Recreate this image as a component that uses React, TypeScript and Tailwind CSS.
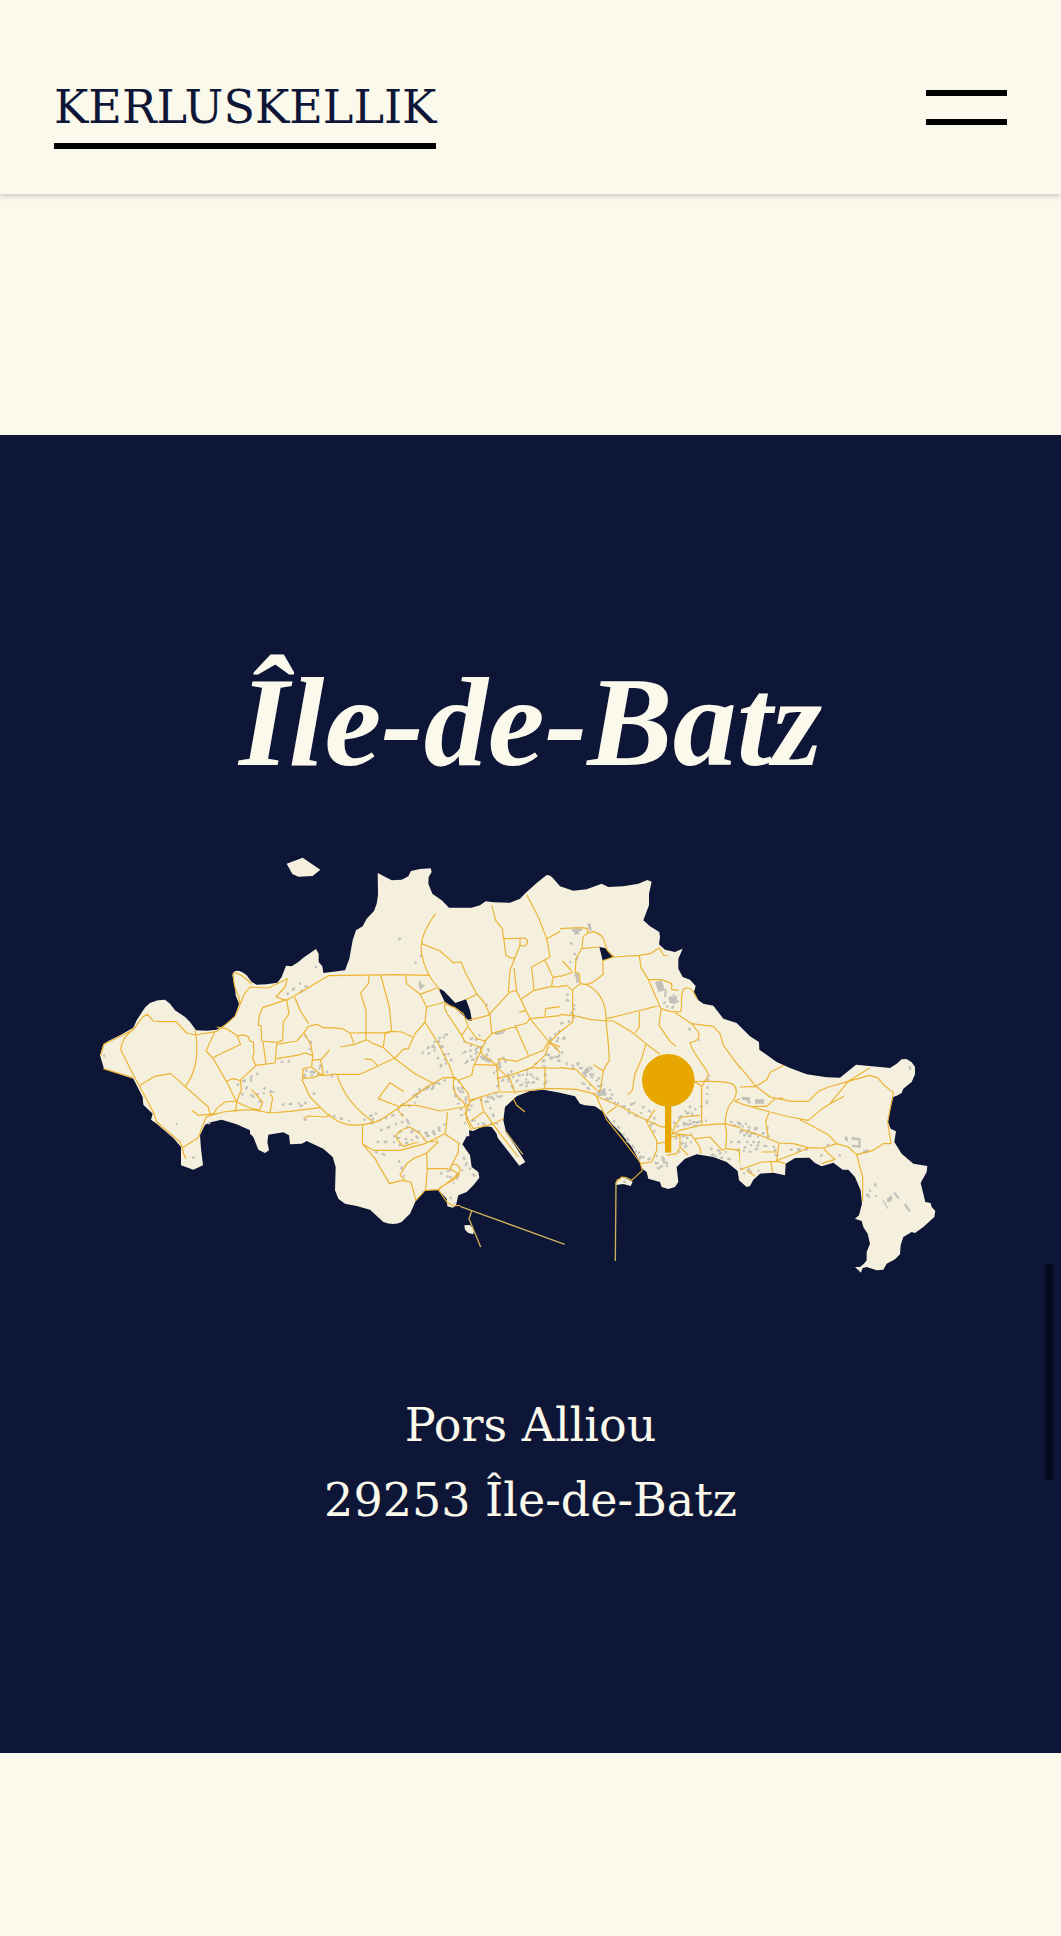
const COAST =
  "M30 645L40 612L55 602L90 585L130 562L140 540L158 512Q166 498 180 488Q200 478 225 478L240 490L255 510L285 530L300 545L318 570L350 571L380 568L410 550L435 528L447 490L437 465L435 440L427 405Q429 392 440 391Q456 391 470 405L485 425L500 433L530 432L562 427L575 410L588 376L605 378L625 365L640 352L678 326L686 340L686 365L697 378L700 398L765 390L778 355L788 300L798 270L818 258L830 235L852 212L860 190L864 165L863 98L905 120L935 118L955 108L963 92L990 86L1022 84L1025 95L1016 110L1015 130L1027 160L1055 180L1077 202L1145 202L1170 195L1187 183L1210 186L1260 187L1290 175L1310 155L1340 128L1370 104Q1380 103 1388 112L1410 138L1450 151L1490 147L1535 130L1555 140L1600 138L1645 130L1672 119L1685 124L1677 160L1677 195L1660 240L1680 258L1708 275L1710 290L1707 312L1725 328L1755 335L1778 325L1765 355L1765 385L1778 410L1800 418L1817 437L1812 455L1825 480L1840 490L1870 496L1900 535L1940 548L1980 588L2007 605L2008 628L2060 665L2100 683L2150 702L2210 711L2250 712L2298 673L2330 676L2400 683L2420 670L2435 657L2450 656L2465 666L2475 680L2475 702L2465 725L2440 745L2435 758L2420 766L2410 770L2400 810L2394 845L2402 865L2418 873L2413 905L2435 940L2470 970L2512 977L2510 995L2492 1028L2500 1060L2506 1085L2522 1088L2525 1100L2536 1112L2533 1130L2500 1160L2475 1178L2465 1175L2440 1190L2432 1215L2430 1242L2415 1257L2390 1270L2380 1288L2360 1290L2330 1280L2318 1283L2313 1297L2295 1280L2310 1280L2322 1270L2330 1260L2330 1235L2340 1210L2333 1180L2320 1160L2315 1142L2295 1135L2307 1125L2316 1090L2312 1050L2295 1010L2275 988L2258 988L2230 967L2195 978L2175 968L2158 952L2115 953L2087 970L2085 1005L2050 997L2010 1000L1990 1018L1980 1037L1970 1040L1947 1020L1943 992L1910 965L1870 950L1820 942L1785 955L1760 980L1765 1025L1755 1040L1735 1046L1715 1040L1710 1025L1675 1015L1670 995L1657 985L1650 965L1625 920L1590 875L1565 850L1540 815L1515 798L1485 795L1470 790L1455 768L1410 757L1360 748L1320 752L1280 768L1245 800L1240 840L1248 875L1306 965L1288 976L1223 892L1220 880L1205 860L1180 857L1150 872L1137 870L1138 888L1130 888L1117 912L1140 945L1145 980L1165 995L1168 1012L1150 1035L1130 1055L1105 1065L1098 1095L1088 1102L1072 1098L1070 1075L1045 1048L1005 1050L978 1080L960 1120L935 1145Q910 1157 880 1145L840 1108L800 1097L765 1090L745 1075L735 1050L737 980L728 950L700 925L650 902L635 910L600 912L597 885L580 876L535 883L532 905L537 930L525 938L505 928L490 890L480 880L480 870L440 852L395 838L365 845L345 853L330 885L333 925L339 975L310 988L273 975L273 920L250 893L200 850L183 838L188 820L160 793L158 770L130 715L85 700L42 685Z";

const ISLETS =
  "M590 70L638 52L691 88L668 107L625 109L607 101ZM1123 1155L1140 1154L1152 1168L1150 1182L1135 1178L1125 1168ZM1578 1034L1580 1018L1600 1010L1628 1024L1622 1037L1600 1031Z";

const WATER =
  "M1044 442L1062 452L1096 488L1128 477L1140 510L1146 541L1135 540L1112 518L1098 506L1064 484ZM1528 320L1545 323L1573 349L1538 360Z";

const WEST_ROADS =
  "M32 645L42 612L130 568L158 530L172 522L190 542L215 544L258 544L290 578L315 584L380 574L410 550L435 528L452 488L462 462L480 440L535 443L592 415L585 440L558 470L590 480L650 445L715 406L900 403 M130 566Q90 600 93 630L128 700L150 740L190 815L200 845L270 905L277 922L325 892L348 830L362 825L400 815L440 810L490 808L540 818L600 813L690 802 M40 685L128 712 M150 735L195 708L242 700L355 800L360 822 M315 570Q325 610 318 660Q310 710 284 740 M375 573L348 632L370 655L410 725L440 785Q480 805 510 810 M368 652L452 612L440 585L410 565L380 560 M440 588Q465 580 475 590L480 602L490 605L492 635L488 655L498 675L450 720L455 745L440 785L436 815 M498 675L555 668L560 612L620 602L640 580L655 558 M505 555L508 525L518 502L590 478L597 520L580 545L578 600L560 606L515 602L513 556Z M519 605L528 670 M614 470L630 510L656 550 M656 558L680 552L700 562L750 563 M560 655L620 645L645 638L668 645L663 615L642 578 M668 645L665 680L640 685L637 720L660 770L715 825L740 842 M665 680L695 705L805 702 M638 714L670 712L700 700L692 660L720 627 M692 657L665 660 M370 822L380 805L405 785L440 782 M306 810L325 825L375 820 M485 748L518 785L508 810 M540 760L548 772L540 817 M640 835L655 827L710 830L720 820 M410 722L430 715L455 722 M277 922Q278 940 288 955 M430 400Q430 440 445 465L450 490 M430 398Q450 395 485 432";

const VILLAGE_ROADS =
  "M0 406L200 403L298 405 M0 562L38 565L60 578L165 577L185 573L215 575L248 590 M117 406L115 430L92 458L108 510L108 600 M152 404L178 500L185 573L165 580L160 620 M60 578L72 610 M30 620L75 612L110 598L130 610L160 622L195 655L255 700L315 732 M0 702L90 702L195 653L220 627L235 625L255 580L285 545L290 500L270 462L230 430L227 405 M270 462L320 443 M290 500L345 485 M317 220Q275 275 273 320Q275 365 300 410L330 450 M345 487Q350 495 375 502L400 520L415 560L440 595L465 602L485 580 M275 310L330 332L370 367L393 365L408 400L440 460L465 490L480 525L485 580L590 548L600 535L725 522 M440 462L408 478 M415 540L475 525L540 455L560 450 M485 195L497 240L517 265L528 345L540 353L555 352 M523 295L585 293Q600 305 585 317L570 315L540 390L535 455 M570 293L570 315 M552 383L560 452L600 535L655 602 M590 163L625 230L650 295L660 350L605 380L612 450 M648 297L705 265L720 263 M645 360L670 412L730 395 M668 415L665 438L612 450L575 475 M665 438L690 440L710 435 M697 362L725 392 M645 527L647 505L690 499 M568 516L588 510 M555 555L575 600L595 645 M655 602L700 645L718 682 M727 545L690 575L660 605L645 645L605 682 M655 605L690 620L708 598 M605 682L740 685 M645 682L645 745 M345 490Q340 505 355 525L395 585L405 605L450 620L455 640L500 675L510 690L540 715L555 760 M412 560L395 585 M465 605L430 680L425 705L385 720L372 715L360 680L325 610L285 545 M435 672L500 675L510 655L560 663L640 630L655 605 M500 715L540 705L605 682 M500 675L508 750 M420 780L500 755L555 755L645 745L740 745 M372 712Q362 760 400 785L408 800L410 840L425 870 M385 912L385 935L360 985L385 1000 M385 720L415 760L418 790L405 820L430 865L485 853L520 835 M418 785L450 770L460 810L510 880L565 950 M550 775L560 795L585 815 M425 840L460 815 M380 712L340 712L290 740L210 800L150 840Q50 875 0 825 M22 705Q45 785 130 845 M210 800L145 775L180 727L222 754 M210 795L260 795L330 812L400 800L420 790 M200 805L220 830 M98 855L97 910L130 930L210 930L285 910L345 880L390 912 M352 815Q350 860 345 880 M97 910L135 955L178 1030L215 1020L243 1025L258 1080L285 1050L325 1048L362 1020L385 1000 M290 940L292 985L287 1048 M290 985L355 985 M325 905L290 938L250 955L230 970L210 1005L225 1018 M198 890Q200 870 240 860L270 880L290 905L325 902 M198 890L205 902L220 918L265 905 M325 1048L350 1085L370 1097L390 1095 M360 990Q360 970 380 972Q402 990 375 1015L325 1045 M104 655L125 658L142 675";

const EAST_ROADS =
  "M-20 268L0 265L60 262L82 264L84 278L100 274Q122 280 130 295L142 330L160 350L238 345L270 340L298 323L310 344L323 347 M84 278Q68 285 68 300L66 322L48 355L46 395L58 400L60 430L38 448L38 545L0 575 M66 325L118 320 M128 362L160 350 M128 362L130 402L100 425L80 433L58 430 M-20 438L0 438L20 435L38 450 M-10 412L40 395 M8 362L35 392 M75 430Q140 460 138 540L145 610L148 660L130 690L122 745L115 755 M0 523L40 525L90 537L140 542L160 542L215 575L258 610L300 642 M238 345L243 382L265 418L303 505L330 513L362 515L365 490Q362 462 372 445Q388 438 400 455L411 475 M265 418L305 418L335 430L335 447L355 450 M140 535L210 518L300 495 M238 515L238 560L225 578 M303 507L297 555L330 603L347 617 M345 517L395 550L415 575Q425 600 390 607Q395 630 440 690L445 705L425 740L425 850 M395 550L460 558L480 580L490 615L545 690L560 700L590 740L620 760L660 773 M258 610L245 655L225 700L217 750L203 762 M403 724L425 738 M403 724Q500 720 520 733Q538 750 520 780Q498 800 495 850L420 855L360 870L335 882 M523 783L620 740L635 715L670 675 M525 783L560 795L600 803 M495 850L540 862L600 885L655 907 M495 850L500 880L497 925L487 930L450 890L405 895 M500 925L540 930L577 920 M537 925L542 985L610 965L655 962 M547 985L585 1007 M0 682L48 687L110 750 M0 745L50 747L100 760L115 770L180 798L240 830L300 858L335 865 M100 673L130 692 M105 758L140 838L190 900L240 965L247 990L215 1020L200 1012L185 1010L170 1025 M140 820L170 798 M285 808L260 845L290 900L290 930L275 965L240 970 M290 910L320 905L335 890L360 885L360 920L385 945 M335 885L345 855L365 830L420 825 M340 880L395 885L420 920L422 940 M320 945L350 940L360 920L360 880";

const CAPE_ROADS =
  "M-20 280L0 260L50 258 M-20 180L0 200L48 258L90 290L155 303L205 303L235 273L265 260L325 243L388 225L412 232L435 257L460 277L443 365L453 430L430 430L400 450L350 463L368 530L368 603 M48 258L80 238L92 215L132 195 M325 243L390 202 M-10 306L30 318L90 335L150 350L205 360L240 330L270 310L325 243 M270 310L312 288 M40 318L80 318L105 295L130 293 M180 358L200 368L265 403L290 430 M87 337L77 362L85 410 M-10 383L60 405L117 428L160 430L205 442L250 443L290 430L325 440L350 463 M117 428L110 482 M65 455L112 455 M-5 510L65 485L115 483L135 490 M112 480L160 462L205 443 M93 485L98 517 M20 510L45 528 M250 443L265 460L285 477L245 490";

const CAUSEWAYS = "M1110 1098L1424 1212 M1145 1112L1137 1135L1172 1220 M1578 1025L1576 1262 M1248 875L1298 942";

const SCATTER_A =
  "M590 463L630 430L650 440L628 458 M572 665L600 662 M645 585L668 612L650 640 M640 705L700 680L685 670L728 710 M645 690L690 700L640 710 M440 735L490 705L515 695 M455 765L490 712L455 725 M520 742L545 755L485 765L510 785L500 790 M575 793L650 788L625 800 M668 760L680 760 M730 825L735 830L780 842 M642 838L652 838 M675 382L680 378 M45 645L40 648 M307 953L314 950 M357 845L357 852 M258 850L262 852";

const SCATTER_B =
  "M205 297L215 293L210 298 M253 368L260 365 M270 350L275 345 M275 640L325 595L355 580L300 625L345 615L285 645 M320 655L360 635L330 680L370 655 M400 605L450 585L405 635L440 625L410 665L480 640L465 605L430 650L485 660L525 655 M500 695L515 650L530 660L490 700 M500 740L545 690L530 730L560 700L600 725L540 745L595 685L585 740L620 720L600 700L650 735L640 660L700 640L660 610L715 590L650 600L690 570L675 590 M615 670L680 650L640 640L695 665L740 680L750 660L730 685L790 680L755 705L810 715L770 690L820 740L760 730L800 770L830 740L850 760L830 775L860 790 M500 580L525 572 M470 490L470 510 M715 460L705 475L740 500L720 515L740 525L715 545L690 550 M725 270L755 268L725 285 M730 340L745 345L735 365L710 365 M720 310L740 305 M735 400L742 425 M385 720L405 760L380 740L415 780L385 775L430 800L395 825L430 840L400 850 M370 740L380 780L395 810 M450 780L500 760L460 790L520 765L470 775 M480 800L500 850L440 850L480 860 M100 840L140 815L120 850L190 825L220 790L250 800L270 745L310 735L245 770L330 720L300 750L360 710 M150 870L230 840L250 870L300 880L345 850L320 880L280 890L330 865 M190 890L230 860L270 900L300 885 M140 905L190 905L210 915L250 900L190 890 M135 935L170 945 M205 960L215 975L215 1000L225 1010 M330 1000L360 990L350 1015L390 1000L370 1030L410 970L400 950L435 1010 M360 1070L375 1090 M215 820L240 850 M850 840L880 880L900 905 M820 760L880 800";

const SCATTER_C =
  "M190 800L220 790L200 815L240 830L250 800L280 820L260 840L285 850 M285 830L270 860L290 880 M340 850L390 800L400 835L350 860L440 840L370 850L420 860 M360 830L440 790L445 700L450 715 M380 760L395 765 M385 565L395 570 M415 600L420 600 M510 845L560 850L520 855L600 865L530 875L590 880L550 885L600 890L625 860L610 880L635 895 M510 905L600 905L530 930L580 935L600 915 M590 915L650 920L640 940L660 950 M450 925L500 935L450 945L530 960 M540 985L580 990L550 1000L600 990 M690 928L750 925L700 935 M200 900L260 960L285 945L320 955L280 970L330 965L290 985L330 975 M225 930L250 960L230 950 M345 895L395 880L360 915L395 905L350 940 M190 1025L210 1020 M780 945L790 945 M835 945L845 945 M800 915L820 910 M310 490L345 460L320 500L355 480L330 510";

const BLOCKS =
  "M985 430L992 420L995 432L1006 434L990 450ZM1453 265L1468 263L1468 282L1452 282ZM1492 248L1503 252L1505 272L1497 270ZM1695 425L1715 420L1725 450L1705 455ZM1725 445L1730 445L1728 470L1722 470ZM1740 470L1762 468L1758 490L1738 488ZM1955 770L1978 770L1982 790L1972 788L1972 780L1956 779ZM1995 777L2022 777L2022 790L1995 790ZM2263 890L2272 888L2275 905L2265 900ZM2285 890L2312 893L2312 923L2286 920L2286 913L2305 915L2305 900L2285 898ZM2390 1075L2405 1065L2408 1080L2393 1087ZM2410 1057L2415 1055L2429 1073L2424 1077ZM2441 1093L2448 1090L2463 1112L2457 1115ZM2378 1082L2382 1080L2395 1104L2392 1106ZM2326 1060L2337 1060L2340 1072L2330 1070ZM2350 1030L2357 1028L2362 1038L2355 1040ZM2335 1042L2345 1052L2340 1057ZM2352 1065L2362 1065L2358 1072ZM2455 678L2462 676L2466 688L2458 688ZM1475 700L1490 680L1500 690L1485 706ZM1520 752L1545 745L1550 765L1525 768ZM1174 645L1200 655L1200 668L1180 660ZM1455 398L1465 397L1467 425L1460 428ZM1215 575L1240 571L1240 580L1216 584ZM2320 930L2335 927L2335 937L2320 940Z";

function IslandMap() {
  return (
    <svg viewBox="-108 50 2859 1250" className="block h-auto w-full" role="img" aria-label="Carte de l'Île-de-Batz">
      <defs>
        <clipPath id="west">
          <rect x="0" y="0" width="720" height="1300" />
        </clipPath>
        <clipPath id="village">
          <rect x="720" y="0" width="690" height="1300" />
        </clipPath>
        <clipPath id="east">
          <rect x="1410" y="0" width="540" height="1300" />
        </clipPath>
        <clipPath id="cape">
          <rect x="1950" y="0" width="700" height="1300" />
        </clipPath>
      </defs>
      <path d={COAST} fill="#f5f0de" />
      <path d={ISLETS} fill="#f5f0de" />
      <path d={WATER} fill="#0d1637" />
      <path d={CAUSEWAYS} fill="none" stroke="#cfb05c" strokeWidth="4" />
      <g fill="none" stroke="#c3c0b9" strokeWidth="7" strokeDasharray="8 13 11 17 6 12">
        <path d={SCATTER_A} />
        <path d={SCATTER_B} transform="translate(720 0)" />
        <path d={SCATTER_C} transform="translate(1410 0)" />
      </g>
      <path d={BLOCKS} fill="#c3c0b9" />
      <g fill="none" stroke="#ecb332" strokeWidth="3.5" strokeLinejoin="round">
        <g clipPath="url(#west)">
          <path d={WEST_ROADS} />
        </g>
        <g clipPath="url(#village)">
          <path d={VILLAGE_ROADS} transform="translate(720 0)" />
        </g>
        <g clipPath="url(#east)">
          <path d={EAST_ROADS} transform="translate(1410 0)" />
        </g>
        <g clipPath="url(#cape)">
          <path d={CAPE_ROADS} transform="translate(1950 480)" />
        </g>
      </g>
      <g fill="#e8a600">
        <circle cx="1735" cy="720" r="79" />
        <rect x="1725" y="780" width="19" height="157" />
      </g>
    </svg>
  );
}

export default function App() {
  return (
    <div className="relative min-h-screen bg-[#fbf8ec]">
      <header className="flex items-start justify-between px-[54px] pt-20 pb-[45px] shadow-[0_2px_6px_rgba(0,0,0,0.2)]">
        <a
          href="#"
          className="border-b-6 border-black pb-2 font-['DejaVu_Serif',serif] text-[46px] leading-[55px] text-[#0d1637]"
        >
          KERLUSKELLIK
        </a>
        <button type="button" aria-label="Menu" className="mt-[10px] flex w-[81px] flex-col gap-[23px]">
          <span className="h-[6px] w-full bg-black" />
          <span className="h-[6px] w-full bg-black" />
        </button>
      </header>
      <main className="pt-[241px] pb-[183px]">
        <section className="bg-[#0d1637] px-[54px] pt-[212px] pb-[215px] text-center text-[#fbf8ec]">
          <h1 className="font-['Liberation_Serif',serif] text-[128px] leading-[150px] font-bold italic">Île-de-Batz</h1>
          <div className="mt-[60px]">
            <IslandMap />
          </div>
          <address className="mt-[114px] font-['DejaVu_Serif',serif] text-[46px] leading-[75px] not-italic">
            Pors Alliou
            <br />
            29253 Île-de-Batz
          </address>
        </section>
      </main>
      <div className="absolute top-[1264px] right-2 h-[216px] w-2 rounded-full bg-[#050a1b]" />
    </div>
  );
}
